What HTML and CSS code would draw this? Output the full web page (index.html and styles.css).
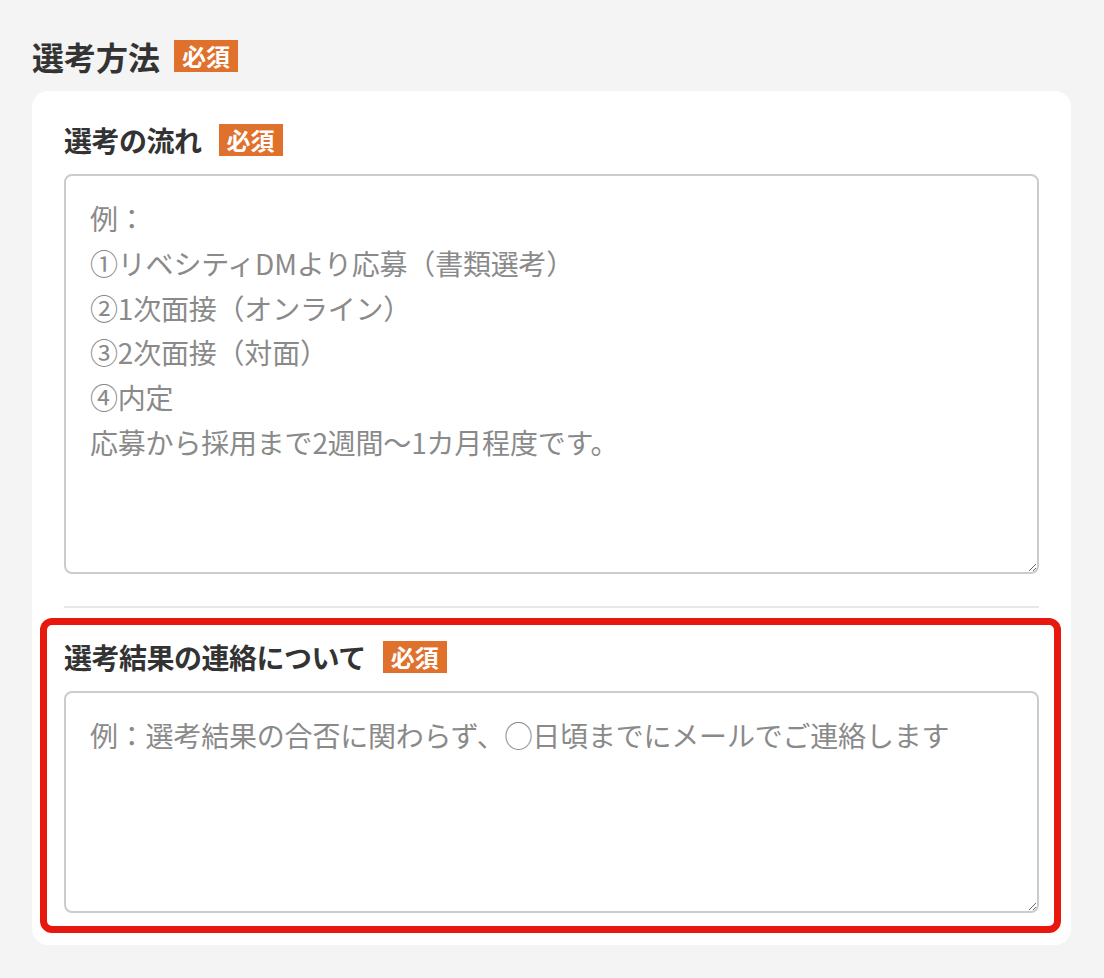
FILE: index.html
```html
<!DOCTYPE html>
<html lang="ja">
<head>
<meta charset="utf-8">
<link rel="stylesheet" href="styles.css">
</head>
<body>
<div class="page">
  <div class="title-row">
    <h1 class="title">選考方法</h1>
    <span class="badge">必須</span>
  </div>
  <div class="card">
    <div class="field field-first">
      <div class="label-row">
        <span class="label">選考の流れ</span>
        <span class="badge">必須</span>
      </div>
      <textarea class="input input-tall" placeholder="例：
①リベシティDMより応募（書類選考）
②1次面接（オンライン）
③2次面接（対面）
④内定
応募から採用まで2週間〜1カ月程度です。"></textarea>
    </div>
    <div class="divider"></div>
    <div class="field field-highlight">
      <div class="label-row">
        <span class="label">選考結果の連絡について</span>
        <span class="badge">必須</span>
      </div>
      <textarea class="input input-short" placeholder="例：選考結果の合否に関わらず、◯日頃までにメールでご連絡します"></textarea>
    </div>
  </div>
</div>
</body>
</html>
```
FILE: styles.css
```css
* { box-sizing: border-box; }
html, body {
  margin: 0;
  padding: 0;
  background: #f4f4f4;
}
body {
  font-family: "Noto Sans CJK JP", "Noto Sans", sans-serif;
  color: #333333;
}
.page {
  padding: 40px 33px 0 32px;
}
.title-row {
  display: flex;
  align-items: center;
  gap: 14px;
  height: 32px;
  margin-bottom: 19px;
}
.title {
  margin: 0;
  font-size: 32px;
  font-weight: 700;
  line-height: 32px;
  color: #333333;
}
.badge {
  display: inline-flex;
  align-items: center;
  justify-content: center;
  height: 32px;
  width: 64px;
  background: #e0712c;
  color: #ffffff;
  font-size: 24px;
  font-weight: 700;
  line-height: 32px;
}
.card {
  background: #ffffff;
  border-radius: 16px;
  padding: 33px 32px 32px 32px;
}
.field {
  display: flex;
  flex-direction: column;
  gap: 18px;
}
.field-first {
  padding-bottom: 32px;
}
.field-highlight {
  position: relative;
  padding-top: 33px;
}
.field-highlight::before {
  content: "";
  position: absolute;
  left: -24px;
  right: -22px;
  top: 10px;
  bottom: -20px;
  border: 7px solid #e8180e;
  border-radius: 12px;
  pointer-events: none;
}
.label-row {
  display: flex;
  align-items: center;
  gap: 17px;
  height: 32px;
}
.label {
  font-size: 28px;
  letter-spacing: -0.5px;
  font-weight: 700;
  line-height: 32px;
  color: #333333;
}
.divider {
  height: 2px;
  background: #e8e8e8;
}
.input {
  display: block;
  width: 100%;
  border: 2px solid #cccccc;
  border-radius: 8px;
  padding: 20px 24px;
  font-family: "Noto Sans CJK JP", "Noto Sans", sans-serif;
  font-size: 28px;
  letter-spacing: -0.2px;
  line-height: 1.6;
  color: #333333;
  background: #ffffff;
  margin: 0;
  outline: none;
}
.input::placeholder {
  color: #8a8a8a;
  opacity: 1;
}
.input-tall {
  height: 400px;
}
.input-short {
  height: 222px;
}
```
